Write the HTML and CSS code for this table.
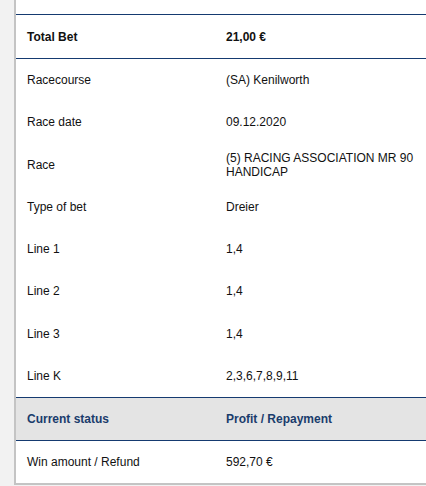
FILE: index.html
```html
<!DOCTYPE html>
<html lang="en">
<head>
    <meta charset="UTF-8">
    <title>Bet details</title>
    <link rel="stylesheet" href="styles.css">
</head>
<body>
    <!-- Detalle de la apuesta -->
    <div class="panel">
        <div class="row row-total">
            <div class="cell">Total Bet</div>
            <div class="cell">21,00 €</div>
        </div>
        <div class="row">
            <div class="cell">Racecourse</div>
            <div class="cell">(SA) Kenilworth</div>
        </div>
        <div class="row">
            <div class="cell">Race date</div>
            <div class="cell">09.12.2020</div>
        </div>
        <div class="row">
            <div class="cell">Race</div>
            <div class="cell">(5) RACING ASSOCIATION MR 90 HANDICAP</div>
        </div>
        <div class="row">
            <div class="cell">Type of bet</div>
            <div class="cell">Dreier</div>
        </div>
        <div class="row">
            <div class="cell">Line 1</div>
            <div class="cell">1,4</div>
        </div>
        <div class="row">
            <div class="cell">Line 2</div>
            <div class="cell">1,4</div>
        </div>
        <div class="row">
            <div class="cell">Line 3</div>
            <div class="cell">1,4</div>
        </div>
        <div class="row">
            <div class="cell">Line K</div>
            <div class="cell">2,3,6,7,8,9,11</div>
        </div>

        <!-- Estado actual -->
        <div class="row row-head">
            <div class="cell">Current status</div>
            <div class="cell">Profit / Repayment</div>
        </div>
        <div class="row row-last">
            <div class="cell">Win amount / Refund</div>
            <div class="cell">592,70 €</div>
        </div>
    </div>
</body>
</html>
```

FILE: styles.css
```css
/* Estilos generales */
body {
    margin: 0;
    padding: 0;
    font-family: 'Liberation Sans', Arial, sans-serif;
    font-size: 12px;
    line-height: 14px;
    color: #111;
    background-color: #f2f2f2;
}

/* Panel principal */
.panel {
    margin-left: 14px;
    padding-top: 14px;
    background-color: white;
    border-left: 2px solid #c4c4c4;
    border-bottom: 2px solid #c4c4c4;
}

/* Filas */
.row {
    display: grid;
    grid-template-columns: 199px 1fr;
    align-items: center;
    height: 42.25px;
}

.cell {
    padding-left: 11px;
}

.row-total {
    height: 43px;
    font-weight: bold;
    border-top: 1px solid #153a70;
    border-bottom: 1px solid #153a70;
}

/* Cabecera de estado */
.row-head {
    height: 42px;
    font-weight: bold;
    color: #1a3c6c;
    background-color: #e4e4e4;
    border-top: 1px solid #153a70;
    border-bottom: 1px solid #153a70;
}

.row-last {
    height: 42px;
}
```
